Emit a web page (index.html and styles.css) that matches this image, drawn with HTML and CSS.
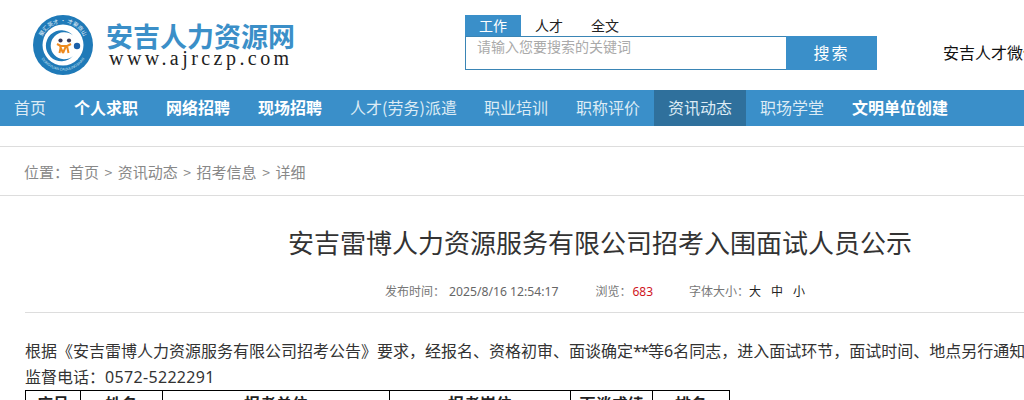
FILE: index.html
```html
<!DOCTYPE html>
<html lang="zh-CN">
<head>
<meta charset="utf-8">
<title>安吉雷博人力资源服务有限公司招考入围面试人员公示</title>
<link rel="stylesheet" href="styles.css">
</head>
<body>
<div class="page">
  <header class="header">
    <a class="logo">
      <svg class="logo-mark" width="60" height="60" viewBox="0 0 60 60">
        <defs>
          <path id="arcTop" d="M7.8 30a22.2 22.2 0 0 1 44.4 0"/>
          <path id="arcBot" d="M4.5 30a25.5 25.5 0 0 0 51 0"/>
        </defs>
        <circle cx="30" cy="30" r="30" fill="#1f7ab8"/>
        <circle cx="30" cy="30" r="20.5" fill="#fff"/>
        <text class="ring-cn"><textPath href="#arcTop" startOffset="50%" text-anchor="middle">聚汇英才 · 才聚商山</textPath></text>
        <text class="ring-en"><textPath href="#arcBot" startOffset="50%" text-anchor="middle">DONGYUAN CAIJULINGSHAN</textPath></text>
        <path d="M40 20.5A15.5 15.5 0 1 0 40 41A13.5 13.5 0 1 1 40 20.5Z" fill="#1f7ab8"/>
        <circle cx="44" cy="31" r="3.2" fill="#1c5fa8"/>
        <circle cx="27.5" cy="25.5" r="2.1" fill="#3a3a5a"/>
        <circle cx="36" cy="25.5" r="2.1" fill="#3a3a5a"/>
        <path d="M24 29l4 2-1.5 7M30 38l-3-7M30 38l3-7M38 29l-4 2 1.5 7M27 31h7" fill="none" stroke="#ee8a1f" stroke-width="2"/>
      </svg>
      <div class="logo-text">
        <div class="logo-cn">安吉人力资源网</div>
        <div class="logo-en">www.ajrczp.com</div>
      </div>
    </a>
    <div class="search">
      <div class="tabs">
        <span class="tab tab-on">工作</span>
        <span class="tab">人才</span>
        <span class="tab">全文</span>
      </div>
      <div class="search-box">
        <span class="search-hint">请输入您要搜索的关键词</span>
        <span class="search-btn">搜索</span>
      </div>
    </div>
    <div class="wx">安吉人才微信公众号</div>
  </header>
  <nav class="nav">
    <a class="nav-item">首页</a>
    <a class="nav-item nav-bold">个人求职</a>
    <a class="nav-item nav-bold">网络招聘</a>
    <a class="nav-item nav-bold">现场招聘</a>
    <a class="nav-item nav-tight">人才(劳务)派遣</a>
    <a class="nav-item">职业培训</a>
    <a class="nav-item">职称评价</a>
    <a class="nav-item nav-on">资讯动态</a>
    <a class="nav-item">职场学堂</a>
    <a class="nav-item nav-bold">文明单位创建</a>
  </nav>
  <div class="crumb">
    <span class="crumb-label">位置：</span><a>首页</a><i>&gt;</i><a>资讯动态</a><i>&gt;</i><a>招考信息</a><i>&gt;</i><a>详细</a>
  </div>
  <main class="article">
    <h1 class="title">安吉雷博人力资源服务有限公司招考入围面试人员公示</h1>
    <div class="meta">
      <span class="meta-group"><span class="meta-key">发布时间：</span><span class="meta-date">2025/8/16 12:54:17</span></span>
      <span class="meta-group meta-hits"><span class="meta-key">浏览：</span><span class="hits">683</span></span>
      <span class="meta-group"><span class="meta-key">字体大小：</span><span class="size">大</span><span class="size">中</span><span class="size">小</span></span>
    </div>
    <div class="body">
      <p>根据《安吉雷博人力资源服务有限公司招考公告》要求，经报名、资格初审、面谈确定<span class="stars">**</span>等6名同志，进入面试环节，面试时间、地点另行通知。</p>
      <p>监督电话：<span class="phone">0572-5222291</span></p>
      <table class="list">
        <colgroup>
          <col class="c1"><col class="c2"><col class="c3"><col class="c4"><col class="c5"><col class="c6">
        </colgroup>
        <tr><th>序号</th><th>姓名</th><th>报考单位</th><th>报考岗位</th><th>面谈成绩</th><th>排名</th></tr>
      </table>
    </div>
  </main>
</div>
</body>
</html>
```
FILE: styles.css
```css
* { box-sizing: border-box; }
html, body { margin: 0; padding: 0; overflow: hidden; height: 400px; background: #fff; }
body { font-family: "Noto Sans", "Noto Sans CJK SC", sans-serif; color: #333; }
.page { width: 1200px; }
.header { display: flex; height: 90px; }
.logo { display: flex; margin-left: 33px; padding-top: 15px; width: 432px; }
.logo-mark { flex: none; }
.ring-cn { font: 400 5.5px "Noto Sans CJK SC", sans-serif; fill: #e6f1f8; }
.ring-en { font: 400 3.6px "Liberation Sans", sans-serif; fill: #d4e6f2; }
.logo-text { margin-left: 13px; padding-top: 7px; }
.logo-cn { font: 700 27px/28px "Noto Sans CJK SC", sans-serif; color: #3b8fc8; white-space: nowrap; }
.logo-en { font: 400 20px/16px "Liberation Serif", serif; color: #222; letter-spacing: 3.45px; margin-left: 3px; white-space: nowrap; }
.search { width: 412px; padding-top: 15px; }
.tabs { display: flex; height: 21px; }
.tab { width: 56px; font: 14px/20px "Noto Sans CJK SC", sans-serif; color: #222; text-align: center; }
.tab-on { background: #3a8fc9; color: #fff; }
.search-box { display: flex; height: 34px; border: 1px solid #3a85b5; border-right: 0; }
.search-hint { flex: 1; padding-left: 11px; font: 14px/18px "Noto Sans CJK SC", sans-serif; color: #aaa; }
.search-btn { width: 91px; margin: -1px 0; background: #3a8fc9; color: #fff; font: 16px/33px "Noto Sans CJK SC", sans-serif; letter-spacing: 2px; text-align: center; }
.wx { margin-left: 66px; padding-top: 41px; font: 16px/22px "Noto Sans CJK SC", sans-serif; color: #111; white-space: nowrap; }
.nav { display: flex; height: 36px; background: #3a8fc9; }
.nav-item { padding: 0 14px; font: 16px/34px "Noto Sans CJK SC", sans-serif; color: #dcebf5; white-space: nowrap; }
.nav-tight { padding-right: 13px; }
.nav-bold { font-weight: 700; color: #fff; }
.nav-on { background: #2f709c; }
.crumb { margin-top: 20px; height: 50px; border-top: 1px solid #ddd; border-bottom: 1px solid #ddd; padding-left: 24px; font: 15px/49px "Noto Sans CJK SC", sans-serif; color: #888; }
.crumb i { font-style: normal; margin: 0 5.5px; font-size: 14px; }
.article { padding: 0 25px; }
.title { margin: 14px 0 0; font: 400 26px/64px "Noto Sans CJK SC", sans-serif; color: #333; text-align: center; }
.meta { display: flex; height: 39px; border-bottom: 1px solid #ddd; padding: 7px 0 0 360px; font-size: 12px; line-height: 20px; color: #666; }
.meta-group { margin-right: 37px; white-space: nowrap; }
.meta-hits { margin-right: 36px; }
.meta-key { color: #777; font-family: "Noto Sans CJK SC", sans-serif; }
.meta-date { margin-left: 4px; font-size: 12.2px; }
.hits { margin-left: 1px; color: #d0161e; }
.size { display: inline-block; width: 22px; font-family: "Noto Sans CJK SC", sans-serif; color: #222; }
.body { padding-top: 25px; font-size: 16px; line-height: 26px; color: #333; }
.body p { margin: 0; white-space: nowrap; }
.stars { letter-spacing: -1.3px; }
.phone { letter-spacing: .33px; }
.list { width: 705px; border-collapse: collapse; table-layout: fixed; }
.list th { border: 1px solid #000; font: 700 16px/24px "Noto Sans CJK SC", sans-serif; color: #222; padding: 0; }
.c1 { width: 55px; } .c2 { width: 82px; } .c3 { width: 227px; } .c4 { width: 181px; } .c5 { width: 82px; } .c6 { width: 77px; }
```
